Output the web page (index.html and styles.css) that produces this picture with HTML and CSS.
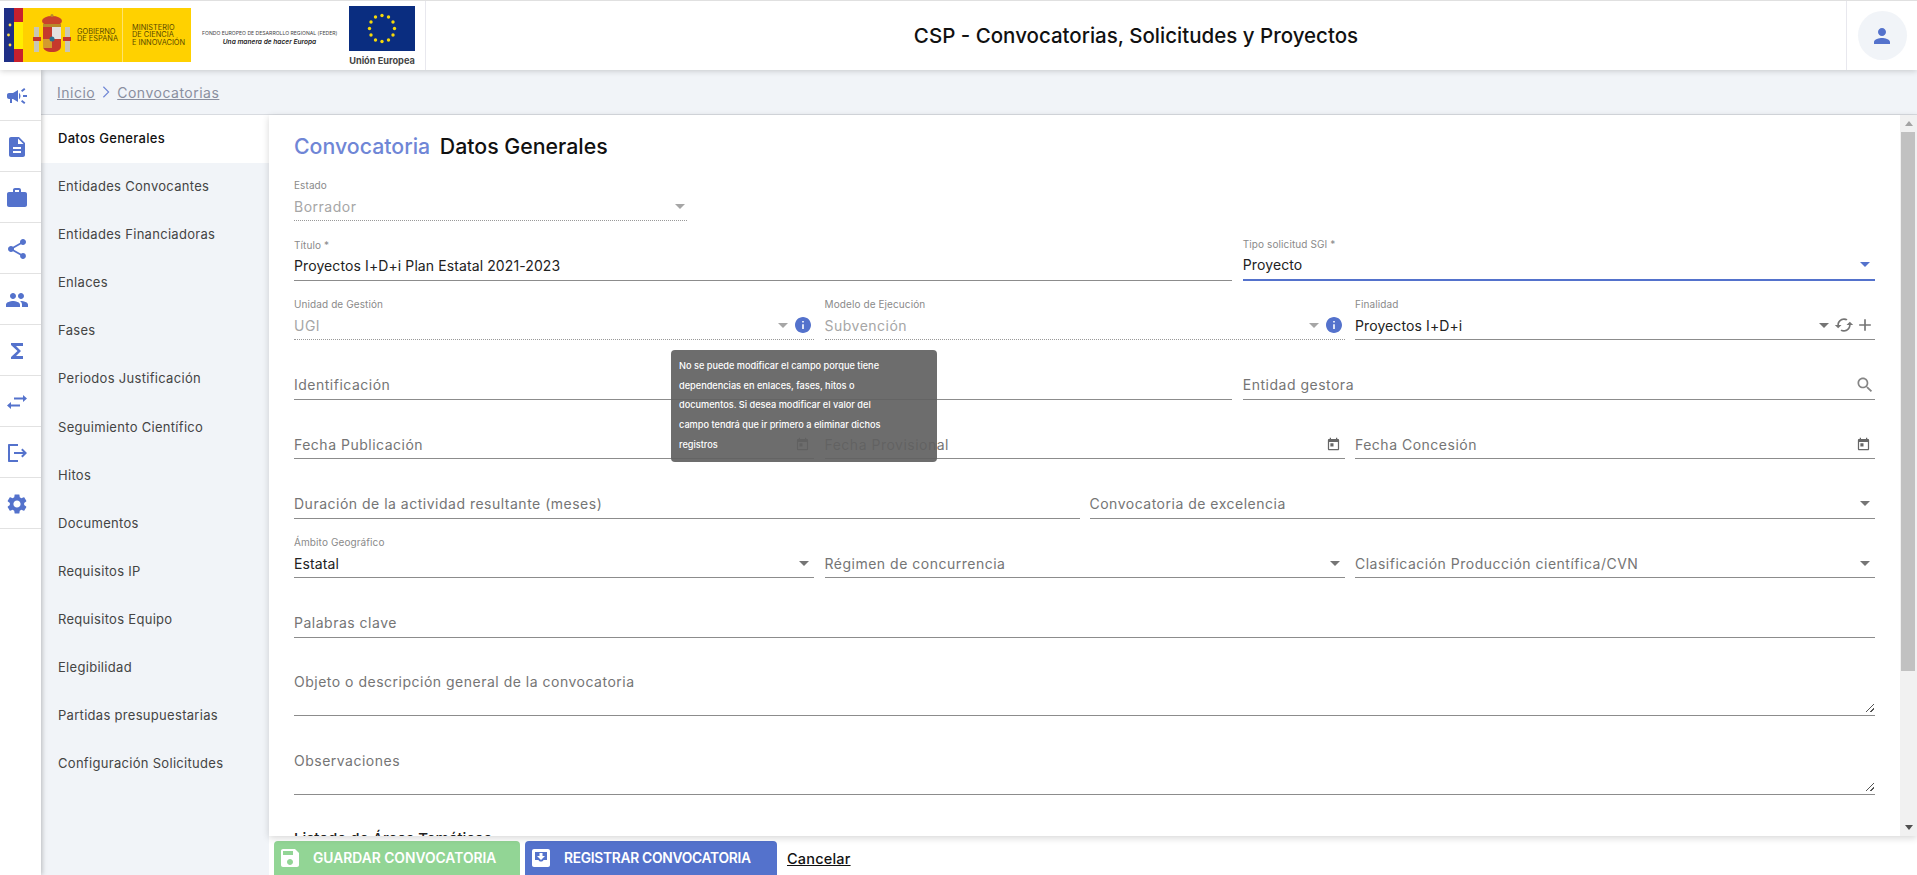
FILE: index.html
```html
<!DOCTYPE html>
<html lang="es">
  <head>
    <meta charset="utf-8">
    <title>CSP - Convocatorias, Solicitudes y Proyectos</title>
    <link rel="stylesheet" href="styles.css">
  </head>

  <body>
    <!-- Icon sprite -->
    <svg class="sprite" xmlns="http://www.w3.org/2000/svg">
      <symbol id="i-campaign" viewBox="0 0 24 24"><path d="M18 11v2h4v-2h-4zm-2 6.61c.96.71 2.21 1.65 3.2 2.39.4-.53.8-1.07 1.2-1.6-.99-.74-2.24-1.68-3.2-2.4-.4.54-.8 1.08-1.2 1.61zM20.4 5.6c-.4-.53-.8-1.07-1.2-1.6-.99.74-2.24 1.68-3.2 2.4.4.53.8 1.07 1.2 1.6.96-.72 2.21-1.65 3.2-2.4zM4 9c-1.1 0-2 .9-2 2v2c0 1.1.9 2 2 2h1v4h2v-4h1l5 3V6L8 9H4zm11.5 3c0-1.33-.58-2.53-1.5-3.35v6.69c.92-.81 1.5-2.01 1.5-3.34z"/></symbol>
      <symbol id="i-description" viewBox="0 0 24 24"><path d="M14 2H6c-1.1 0-1.99.9-1.99 2L4 20c0 1.1.89 2 1.99 2H18c1.1 0 2-.9 2-2V8l-6-6zm2 16H8v-2h8v2zm0-4H8v-2h8v2zm-3-5V3.5L18.5 9H13z"/></symbol>
      <symbol id="i-work" viewBox="0 0 24 24"><path d="M20 6h-4V4c0-1.11-.89-2-2-2h-4c-1.11 0-2 .89-2 2v2H4c-1.11 0-1.99.89-1.99 2L2 19c0 1.11.89 2 2 2h16c1.11 0 2-.89 2-2V8c0-1.11-.89-2-2-2zm-6 0h-4V4h4v2z"/></symbol>
      <symbol id="i-share" viewBox="0 0 24 24"><path d="M18 16.08c-.76 0-1.44.3-1.96.77L8.91 12.7c.05-.23.09-.46.09-.7s-.04-.47-.09-.7l7.05-4.11c.54.5 1.25.81 2.04.81 1.66 0 3-1.34 3-3s-1.34-3-3-3-3 1.34-3 3c0 .24.04.47.09.7L8.04 9.81C7.5 9.31 6.79 9 6 9c-1.66 0-3 1.34-3 3s1.34 3 3 3c.79 0 1.5-.31 2.04-.81l7.12 4.16c-.05.21-.08.43-.08.65 0 1.61 1.31 2.92 2.92 2.92s2.92-1.31 2.92-2.92-1.31-2.92-2.92-2.92z"/></symbol>
      <symbol id="i-people" viewBox="0 0 24 24"><path d="M16 11c1.66 0 2.99-1.34 2.99-3S17.66 5 16 5c-1.66 0-3 1.34-3 3s1.34 3 3 3zm-8 0c1.66 0 2.99-1.34 2.99-3S9.66 5 8 5C6.34 5 5 6.34 5 8s1.34 3 3 3zm0 2c-2.33 0-7 1.17-7 3.5V19h14v-2.5c0-2.33-4.67-3.5-7-3.5zm8 0c-.29 0-.62.02-.97.05 1.16.84 1.97 1.97 1.97 3.45V19h6v-2.5c0-2.33-4.67-3.5-7-3.5z"/></symbol>
      <symbol id="i-sigma" viewBox="0 0 24 24"><path d="M18 4H6v2l6.5 6L6 18v2h12v-3h-7l5-5-5-5h7z"/></symbol>
      <symbol id="i-swap" viewBox="0 0 24 24"><path d="M22 8.5l-4-3.5v2.5H9v2h9V12l4-3.5zM2 15.5L6 19v-2.5h9v-2H6V12l-4 3.5z"/></symbol>
      <symbol id="i-exit" viewBox="0 0 24 24"><path d="M4 3h9v2H5v14h8v2H4c-.55 0-1-.45-1-1V4c0-.55.45-1 1-1zm13.5 4.5L22 12l-4.5 4.5-1.4-1.4 2.1-2.1H9v-2h9.2l-2.1-2.1 1.4-1.4z"/></symbol>
      <symbol id="i-settings" viewBox="0 0 24 24"><path d="M19.14 12.94c.04-.3.06-.61.06-.94 0-.32-.02-.64-.07-.94l2.03-1.58c.18-.14.23-.41.12-.61l-1.92-3.32c-.12-.22-.37-.29-.59-.22l-2.39.96c-.5-.38-1.03-.7-1.62-.94l-.36-2.54c-.04-.24-.24-.41-.48-.41h-3.84c-.24 0-.43.17-.47.41l-.36 2.54c-.59.24-1.13.57-1.62.94l-2.39-.96c-.22-.08-.47 0-.59.22L2.74 8.87c-.12.21-.08.47.12.61l2.03 1.58c-.05.3-.09.63-.09.94s.02.64.07.94l-2.03 1.58c-.18.14-.23.41-.12.61l1.92 3.32c.12.22.37.29.59.22l2.39-.96c.5.38 1.03.7 1.62.94l.36 2.54c.05.24.24.41.48.41h3.84c.24 0 .44-.17.47-.41l.36-2.54c.59-.24 1.13-.56 1.62-.94l2.39.96c.22.08.47 0 .59-.22l1.92-3.32c.12-.22.07-.47-.12-.61l-2.01-1.58zM12 15.6c-1.98 0-3.6-1.62-3.6-3.6s1.62-3.6 3.6-3.6 3.6 1.62 3.6 3.6-1.62 3.6-3.6 3.6z"/></symbol>
      <symbol id="i-person" viewBox="0 0 24 24"><path d="M12 12c2.21 0 4-1.79 4-4s-1.79-4-4-4-4 1.79-4 4 1.79 4 4 4zm0 2c-2.67 0-8 1.34-8 4v2h16v-2c0-2.66-5.33-4-8-4z"/></symbol>
      <symbol id="i-search" viewBox="0 0 24 24"><path d="M15.5 14h-.79l-.28-.27C15.41 12.59 16 11.11 16 9.5 16 5.91 13.09 3 9.5 3S3 5.91 3 9.5 5.91 16 9.5 16c1.61 0 3.09-.59 4.23-1.57l.27.28v.79l5 4.99L20.49 19l-4.99-5zm-6 0C7.01 14 5 11.99 5 9.5S7.01 5 9.5 5 14 7.01 14 9.5 11.99 14 9.5 14z"/></symbol>
      <symbol id="i-event" viewBox="0 0 24 24"><path d="M19 3h-1V1h-2v2H8V1H6v2H5c-1.11 0-1.99.9-1.99 2L3 19c0 1.1.89 2 2 2h14c1.1 0 2-.9 2-2V5c0-1.1-.9-2-2-2zm0 16H5V8h14v11zM7 10h5v5H7z"/></symbol>
      <symbol id="i-info" viewBox="2 2 20 20"><path d="M12 2C6.48 2 2 6.48 2 12s4.48 10 10 10 10-4.48 10-10S17.52 2 12 2zm1 15h-2v-6h2v6zm0-8h-2V7h2v2z"/></symbol>
      <symbol id="i-cached" viewBox="0 0 24 24"><path d="M19 8l-4 4h3c0 3.31-2.69 6-6 6-1.01 0-1.97-.25-2.8-.7l-1.46 1.46C8.97 19.54 10.43 20 12 20c4.42 0 8-3.58 8-8h3l-4-4zM6 12c0-3.31 2.69-6 6-6 1.01 0 1.97.25 2.8.7l1.46-1.46C15.03 4.46 13.57 4 12 4c-4.42 0-8 3.58-8 8H1l4 4 4-4H6z"/></symbol>
      <symbol id="i-plus" viewBox="0 0 24 24"><path d="M19 13h-6v6h-2v-6H5v-2h6V5h2v6h6v2z"/></symbol>
      <symbol id="i-save" viewBox="0 0 24 24"><path d="M17 3H5c-1.11 0-2 .9-2 2v14c0 1.1.89 2 2 2h14c1.1 0 2-.9 2-2V7l-4-4zm-5 16c-1.66 0-3-1.34-3-3s1.34-3 3-3 3 1.34 3 3-1.34 3-3 3zm3-10H5V5h10v4z"/></symbol>
      <symbol id="i-register" viewBox="0 0 24 24">
        <path fill="#fff" d="M5 3h14c1.1 0 2 .9 2 2v14c0 1.1-.9 2-2 2H5c-1.1 0-2-.9-2-2V5c0-1.1.9-2 2-2z"/>
        <path fill="#5472cc" d="M6 6h12v8h-3.5c-.5 1-1.300 1.500-2.500 1.500s-2-.5-2.500-1.500H6z"/>
        <path fill="#fff" d="M10.500 7h3v3h2.500L12 14l-4-4h2.500z"/>
      </symbol>
    </svg>

    <header class="topbar">
      <div class="logos">
        <div class="gob-logo">
          <svg class="gob-arms" viewBox="0 0 71 54" xmlns="http://www.w3.org/2000/svg">
            <rect width="10" height="54" fill="#1f2f86"/>
            <rect x="10" width="9" height="14" fill="#c8202d"/>
            <rect x="10" y="14" width="9" height="27" fill="#ffed00"/>
            <rect x="10" y="41" width="9" height="13" fill="#c8202d"/>
            <circle cx="6" cy="17" r="1.4" fill="#ffe14a"/>
            <circle cx="4.5" cy="27" r="1.4" fill="#ffe14a"/>
            <circle cx="6" cy="37" r="1.4" fill="#ffe14a"/>
            <rect x="30" y="19" width="5" height="25" fill="#c9c6b4"/>
            <rect x="61" y="19" width="5" height="25" fill="#c9c6b4"/>
            <path d="M29 29h8v4h-8zM59 29h8v4h-8z" fill="#c5362c"/>
            <ellipse cx="48" cy="13" rx="10" ry="5" fill="#c9432b"/>
            <rect x="39" y="16" width="18" height="3" fill="#b98a2a"/>
            <circle cx="48" cy="7.5" r="1.5" fill="#b98a2a"/>
            <path d="M39 19h18v19c0 4-4 6-9 6s-9-2-9-6z" fill="#c5392c"/>
            <rect x="48" y="19" width="9" height="12" fill="#e3dfe0"/>
            <rect x="39" y="31" width="9" height="9" fill="#d49a2e"/>
            <circle cx="48" cy="31" r="2.5" fill="#2c6f8e"/>
          </svg>
          <div class="gob-text gob-text-first">Gobierno<br>de España</div>
          <div class="gob-text gob-text-second">Ministerio<br>de Ciencia<br>e Innovación</div>
        </div>
        <div class="feder">
          <div class="feder-title">FONDO EUROPEO DE DESARROLLO REGIONAL (FEDER)</div>
          <div class="feder-motto">Una manera de hacer Europa</div>
        </div>
        <div class="eu">
          <svg class="eu-flag" viewBox="0 0 66 45" xmlns="http://www.w3.org/2000/svg">
            <rect width="66" height="45" fill="#0a2d80"/>
            <g fill="#f5d90a">
              <circle cx="33" cy="9.5" r="1.7"/><circle cx="39.5" cy="11" r="1.7"/><circle cx="44" cy="16" r="1.7"/>
              <circle cx="45.5" cy="22.5" r="1.7"/><circle cx="44" cy="29" r="1.7"/><circle cx="39.5" cy="34" r="1.7"/>
              <circle cx="33" cy="35.5" r="1.7"/><circle cx="26.5" cy="34" r="1.7"/><circle cx="22" cy="29" r="1.7"/>
              <circle cx="20.5" cy="22.5" r="1.7"/><circle cx="22" cy="16" r="1.7"/><circle cx="26.5" cy="11" r="1.7"/>
            </g>
          </svg>
          <div class="eu-name">Unión Europea</div>
        </div>
      </div>
      <div class="app-title">CSP - Convocatorias, Solicitudes y Proyectos</div>
      <div class="user">
        <div class="avatar"><svg class="icon icon-blue"><use href="#i-person"/></svg></div>
      </div>
    </header>

    <div class="app">
      <aside class="rail">
        <div class="rail-item"><svg class="icon-rail"><use href="#i-campaign"/></svg></div>
        <div class="rail-item"><svg class="icon-rail"><use href="#i-description"/></svg></div>
        <div class="rail-item"><svg class="icon-rail"><use href="#i-work"/></svg></div>
        <div class="rail-item"><svg class="icon-rail"><use href="#i-share"/></svg></div>
        <div class="rail-item"><svg class="icon-rail"><use href="#i-people"/></svg></div>
        <div class="rail-item"><svg class="icon-rail"><use href="#i-sigma"/></svg></div>
        <div class="rail-item"><svg class="icon-rail"><use href="#i-swap"/></svg></div>
        <div class="rail-item"><svg class="icon-rail"><use href="#i-exit"/></svg></div>
        <div class="rail-item"><svg class="icon-rail"><use href="#i-settings"/></svg></div>
      </aside>

      <div class="main">
        <div class="crumbs">
          <a class="crumb">Inicio</a>
          <svg class="crumb-sep" viewBox="0 0 10 16"><path d="M2 2l6 6-6 6" fill="none" stroke="#6f86d6" stroke-width="1.3"/></svg>
          <a class="crumb">Convocatorias</a>
        </div>

        <div class="page">
          <nav class="tabs">
            <a class="tab tab-active">Datos Generales</a>
            <a class="tab">Entidades Convocantes</a>
            <a class="tab">Entidades Financiadoras</a>
            <a class="tab">Enlaces</a>
            <a class="tab">Fases</a>
            <a class="tab">Periodos Justificación</a>
            <a class="tab">Seguimiento Científico</a>
            <a class="tab">Hitos</a>
            <a class="tab">Documentos</a>
            <a class="tab">Requisitos IP</a>
            <a class="tab">Requisitos Equipo</a>
            <a class="tab">Elegibilidad</a>
            <a class="tab">Partidas presupuestarias</a>
            <a class="tab">Configuración Solicitudes</a>
          </nav>

          <div class="content">
            <div class="view">
              <div class="form">
                <h2 class="form-title"><span class="form-title-main">Convocatoria</span> Datos Generales</h2>

                <div class="row">
                  <div class="field field-fixed field-disabled">
                    <div class="field-label">Estado</div>
                    <div class="field-control"><span class="field-text">Borrador</span><i class="arrow"></i></div>
                  </div>
                </div>

                <div class="row row-wide">
                  <div class="field">
                    <div class="field-label">Título *</div>
                    <div class="field-control"><span class="field-text field-filled">Proyectos I+D+i Plan Estatal 2021-2023</span></div>
                  </div>
                  <div class="field field-focus">
                    <div class="field-label">Tipo solicitud SGI *</div>
                    <div class="field-control"><span class="field-text field-filled">Proyecto</span><i class="arrow arrow-blue"></i></div>
                  </div>
                </div>

                <div class="row row-three">
                  <div class="field field-disabled">
                    <div class="field-label">Unidad de Gestión</div>
                    <div class="field-control"><span class="field-text">UGI</span><i class="arrow"></i><svg class="icon-info"><use href="#i-info"/></svg></div>
                  </div>
                  <div class="field field-disabled">
                    <div class="field-label">Modelo de Ejecución</div>
                    <div class="field-control"><span class="field-text">Subvención</span><i class="arrow"></i><svg class="icon-info"><use href="#i-info"/></svg></div>
                  </div>
                  <div class="field">
                    <div class="field-label">Finalidad</div>
                    <div class="field-control field-control-tight">
                      <span class="field-text field-filled">Proyectos I+D+i</span><i class="arrow"></i>
                      <svg class="icon-action"><use href="#i-cached"/></svg><svg class="icon-action"><use href="#i-plus"/></svg>
                    </div>
                  </div>
                </div>

                <div class="row row-wide">
                  <div class="field">
                    <div class="field-control"><span class="field-text">Identificación</span></div>
                  </div>
                  <div class="field">
                    <div class="field-control field-control-tight"><span class="field-text">Entidad gestora</span><svg class="icon-search"><use href="#i-search"/></svg></div>
                  </div>
                </div>

                <div class="row row-three">
                  <div class="field">
                    <div class="field-control"><span class="field-text">Fecha Publicación</span><svg class="icon-date"><use href="#i-event"/></svg></div>
                  </div>
                  <div class="field">
                    <div class="field-control"><span class="field-text">Fecha Provisional</span><svg class="icon-date"><use href="#i-event"/></svg></div>
                  </div>
                  <div class="field">
                    <div class="field-control"><span class="field-text">Fecha Concesión</span><svg class="icon-date"><use href="#i-event"/></svg></div>
                  </div>
                </div>

                <div class="row row-half">
                  <div class="field">
                    <div class="field-control"><span class="field-text">Duración de la actividad resultante (meses)</span></div>
                  </div>
                  <div class="field">
                    <div class="field-control"><span class="field-text">Convocatoria de excelencia</span><i class="arrow"></i></div>
                  </div>
                </div>

                <div class="row row-three">
                  <div class="field">
                    <div class="field-label">Ámbito Geográfico</div>
                    <div class="field-control"><span class="field-text field-filled">Estatal</span><i class="arrow"></i></div>
                  </div>
                  <div class="field">
                    <div class="field-control"><span class="field-text">Régimen de concurrencia</span><i class="arrow"></i></div>
                  </div>
                  <div class="field">
                    <div class="field-control"><span class="field-text">Clasificación Producción científica/CVN</span><i class="arrow"></i></div>
                  </div>
                </div>

                <div class="row">
                  <div class="field">
                    <div class="field-control"><span class="field-text">Palabras clave</span></div>
                  </div>
                </div>

                <div class="row row-area">
                  <div class="field field-area">
                    <div class="field-control"><span class="field-text">Objeto o descripción general de la convocatoria</span></div>
                    <i class="resize"></i>
                  </div>
                </div>

                <div class="row row-area">
                  <div class="field field-area">
                    <div class="field-control"><span class="field-text">Observaciones</span></div>
                    <i class="resize"></i>
                  </div>
                </div>

                <h3 class="section-title">Listado de Áreas Temáticas</h3>
              </div>

              <div class="scrollbar">
                <i class="scroll-up"></i>
                <div class="scroll-track"><div class="scroll-thumb"></div></div>
                <i class="scroll-down"></i>
              </div>

              <div class="tooltip">No se puede modificar el campo porque tiene<br>dependencias en enlaces, fases, hitos o<br>documentos. Si desea modificar el valor del<br>campo tendrá que ir primero a eliminar dichos<br>registros</div>
            </div>

            <div class="actions">
              <button class="btn btn-save"><svg class="btn-icon"><use href="#i-save"/></svg>Guardar convocatoria</button>
              <button class="btn btn-register"><svg class="btn-icon"><use href="#i-register"/></svg>Registrar convocatoria</button>
              <a class="cancel">Cancelar</a>
            </div>
          </div>
        </div>
      </div>
    </div>
  </body>
</html>
```

FILE: styles.css
```css
* {
  box-sizing: border-box;
}
html,
body {
  height: 100%;
}
body {
  display: flex;
  flex-flow: column;
  margin: 0;
  overflow: hidden;
  background: #fff;
  font-family: Inter, "Open Sans", sans-serif;
  color: #333;
}
.sprite {
  display: none;
}

/* Top bar */
.topbar {
  position: relative;
  z-index: 3;
  display: flex;
  flex: none;
  align-items: stretch;
  height: 70px;
  border-top: 1px solid #e0e0e0;
  box-shadow: 0 1px 6px rgba(0, 0, 0, 0.18);
  background: #fff;
}
.logos {
  display: flex;
  flex: none;
  width: 426px;
  padding-left: 4px;
  border-right: 1px solid #e8e8ee;
}
.gob-logo {
  display: flex;
  flex: none;
  width: 187px;
  height: 54px;
  margin-top: 7px;
  background: #ffd100;
}
.gob-arms {
  flex: none;
  width: 71px;
  height: 54px;
}
.gob-text {
  display: flex;
  align-items: center;
  font-size: 7.4px;
  line-height: 7.5px;
  white-space: nowrap;
  text-transform: uppercase;
  color: #5a4a00;
}
.gob-text-first {
  width: 46px;
  margin-left: 2px;
  border-right: 1px solid #ffe36b;
}
.gob-text-second {
  margin-left: 9px;
}
.feder {
  width: 135px;
  margin: 28px 0 0 11px;
  text-align: center;
}
.feder-title {
  font-size: 5.1px;
  line-height: 9px;
  white-space: nowrap;
  color: #444;
}
.feder-motto {
  font-size: 6.6px;
  line-height: 9px;
  font-style: italic;
  font-weight: 600;
  white-space: nowrap;
  color: #222;
}
.eu {
  width: 66px;
  margin: 5px 0 0 12px;
}
.eu-flag {
  display: block;
  width: 66px;
  height: 45px;
}
.eu-name {
  margin-top: 3px;
  font-size: 9.2px;
  line-height: 14px;
  font-weight: 700;
  text-align: center;
  white-space: nowrap;
  color: #444;
}
.app-title {
  display: flex;
  flex: 1;
  justify-content: center;
  align-items: center;
  font-size: 20.5px;
  font-weight: 500;
  color: #111;
}
.user {
  display: flex;
  flex: none;
  justify-content: center;
  align-items: center;
  width: 71px;
  border-left: 1px solid #e8e8ee;
}
.avatar {
  display: flex;
  justify-content: center;
  align-items: center;
  width: 49px;
  height: 49px;
  border-radius: 50%;
  background: #f1f4f8;
}
.icon {
  width: 24px;
  height: 24px;
}
.icon-blue {
  fill: #5472cc;
}

/* Left icon rail */
.app {
  display: flex;
  flex: 1;
  min-height: 0;
}
.rail {
  position: relative;
  z-index: 2;
  flex: none;
  width: 41px;
  box-shadow: 1px 0 5px rgba(0, 0, 0, 0.25);
  background: #fff;
}
.rail-item {
  display: flex;
  align-items: center;
  height: 51px;
  padding: 1px 0 0 5px;
  border-bottom: 1px solid #e2e2e2;
}
.icon-rail {
  width: 24px;
  height: 24px;
  fill: #5472cc;
}

/* Main column */
.main {
  display: flex;
  flex: 1;
  flex-flow: column;
  min-width: 0;
}
.crumbs {
  display: flex;
  flex: none;
  align-items: center;
  gap: 6px;
  height: 45px;
  padding-left: 16px;
  border-bottom: 1px solid #d8dbe0;
  background: #f1f4f8;
}
.crumb {
  font-size: 14px;
  letter-spacing: 0.5px;
  text-decoration: underline;
  color: #8a8f9f;
}
.crumb-sep {
  width: 10px;
  height: 14px;
}
.page {
  display: flex;
  flex: 1;
  min-height: 0;
}
.tabs {
  flex: none;
  width: 228px;
  background: #f1f4f8;
}
.tab {
  display: block;
  height: 48.1px;
  padding-left: 17px;
  font-size: 13px;
  line-height: 47px;
  letter-spacing: 0.3px;
  color: #444;
}
.tab-active {
  font-weight: 500;
  background: #fff;
  color: #111;
}
.content {
  display: flex;
  flex: 1;
  flex-flow: column;
  min-width: 0;
}
.view {
  position: relative;
  z-index: 1;
  display: flex;
  flex: none;
  height: 721px;
  box-shadow: 0 2px 7px rgba(0, 0, 0, 0.16);
  background: #fff;
}

/* Form */
.form {
  flex: 1;
  min-width: 0;
  padding: 0 25px;
  overflow: hidden;
}
.form-title {
  height: 46.5px;
  margin: 0;
  font-size: 21.3px;
  font-weight: 500;
  line-height: 63px;
  color: #111;
}
.form-title-main {
  margin-right: 4px;
  color: #6f86d6;
}
.row {
  display: grid;
  column-gap: 10.5px;
  height: 59.5px;
}
.row-wide {
  grid-template-columns: minmax(0, 938fr) minmax(0, 632fr);
}
.row-three {
  grid-template-columns: repeat(3, minmax(0, 1fr));
}
.row-half {
  grid-template-columns: repeat(2, minmax(0, 1fr));
  column-gap: 10px;
}
.row-area {
  height: 78.5px;
}
.field {
  position: relative;
  display: flex;
  flex-flow: column;
  justify-content: flex-end;
  height: 100%;
  border-bottom: 1px solid #8c8c8c;
}
.field-fixed {
  width: 393px;
}
.field-fixed .field-control {
  padding-right: 2px;
}
.field-disabled {
  border-bottom: 1px dotted #999;
}
.field-disabled .field-text {
  color: #a6a6a6;
}
.field-focus {
  border-bottom: 2px solid #5472cc;
}
.field-label {
  font-size: 10px;
  line-height: 12px;
  letter-spacing: 0.1px;
  color: #8a8a8a;
  transform: translateY(1px);
}
.field-control {
  display: flex;
  align-items: center;
  height: 30px;
  padding: 2px 5px 0 0;
}
.field-control-tight {
  padding-right: 0;
}
.field-text {
  flex: 1;
  min-width: 0;
  font-size: 14px;
  letter-spacing: 0.5px;
  white-space: nowrap;
  color: #757575;
}
.field-filled {
  letter-spacing: 0.1px;
  color: #222;
}
.field-area {
  justify-content: flex-start;
  padding-top: 28px;
}
.arrow {
  flex: none;
  width: 0;
  height: 0;
  border-left: 5px solid transparent;
  border-right: 5px solid transparent;
  border-top: 5px solid #757575;
}
.field-disabled .arrow {
  border-top-color: #a6a6a6;
}
.arrow-blue {
  border-top-color: #5472cc;
}
.icon-info {
  flex: none;
  width: 16px;
  height: 16px;
  margin: 0 -2px 0 7px;
  fill: #5472cc;
}
.icon-action {
  flex: none;
  width: 20px;
  height: 20px;
  margin-left: 1px;
  fill: #757575;
}
.icon-action:first-of-type {
  margin-left: 5px;
}
.icon-search {
  flex: none;
  width: 20px;
  height: 20px;
  fill: #858585;
}
.icon-date {
  flex: none;
  width: 15px;
  height: 15px;
  margin-right: -1px;
  fill: #666;
}
.resize {
  position: absolute;
  right: 1px;
  bottom: 3px;
  width: 9px;
  height: 8px;
  background: linear-gradient(135deg, transparent 50%, #555 50%, #555 58%, transparent 58%, transparent 76%, #555 76%, #555 84%, transparent 84%);
}
.section-title {
  margin: 34px 0 0;
  font-size: 15px;
  font-weight: 500;
  line-height: 20px;
  color: #222;
}

/* Drawn scrollbar */
.scrollbar {
  display: flex;
  flex: none;
  flex-flow: column;
  align-items: center;
  width: 17px;
  background: #f1f1f1;
}
.scroll-up,
.scroll-down {
  flex: none;
  width: 0;
  height: 0;
  margin: 6px 0;
  border-left: 4px solid transparent;
  border-right: 4px solid transparent;
}
.scroll-up {
  border-bottom: 5px solid #a3a3a3;
}
.scroll-down {
  border-top: 5px solid #505050;
}
.scroll-track {
  flex: 1;
  width: 100%;
  padding: 0 2px 0 1px;
}
.scroll-thumb {
  height: 539px;
  background: #c1c1c1;
}

/* Tooltip over the form */
.tooltip {
  position: absolute;
  top: 235px;
  left: 402px;
  width: 266px;
  height: 112px;
  padding: 6px 8px;
  border-radius: 4px;
  background: rgba(97, 97, 97, 0.92);
  font-size: 9.2px;
  font-weight: 500;
  line-height: 19.7px;
  white-space: nowrap;
  color: #fff;
}

/* Bottom actions */
.actions {
  display: flex;
  flex: 1;
  align-items: stretch;
  gap: 5px;
  padding: 5px 0 0 5px;
  background: #fff;
}
.btn {
  display: flex;
  align-items: center;
  gap: 11px;
  padding: 0 0 0 4px;
  border: 0;
  border-radius: 4px 4px 0 0;
  font-family: inherit;
  font-size: 13.8px;
  font-weight: 600;
  text-transform: uppercase;
  color: #fff;
}
.btn-save {
  width: 246px;
  background: #92d595;
}
.btn-register {
  width: 252px;
  letter-spacing: -0.3px;
  background: #5472cc;
}
.btn-icon {
  flex: none;
  width: 24px;
  height: 24px;
  fill: #fff;
}
.cancel {
  align-self: center;
  margin-left: 5px;
  font-size: 14.5px;
  font-weight: 500;
  letter-spacing: 0.2px;
  text-decoration: underline;
  color: #111;
}
```
